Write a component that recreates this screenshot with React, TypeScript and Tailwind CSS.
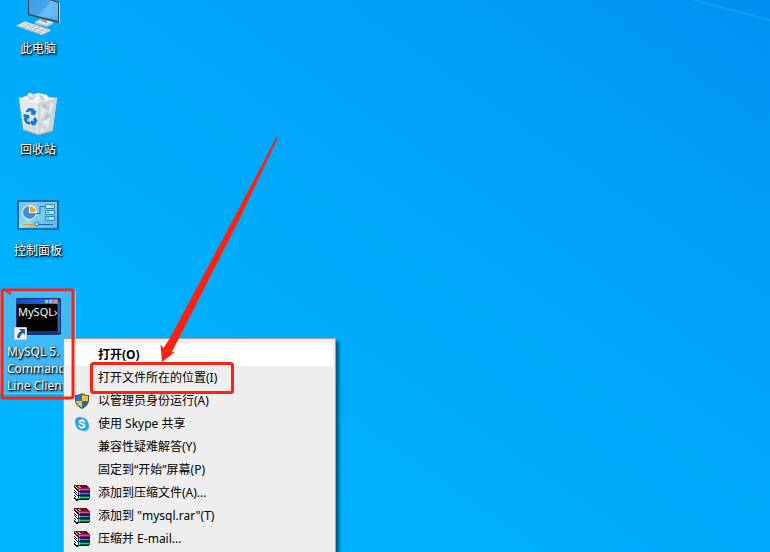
import type { ReactNode } from 'react';
import clsx from 'clsx';

const ComputerIcon = () => (
  <svg viewBox="0 0 48 48" className="size-12 overflow-visible">
    <defs>
      <linearGradient id="screen" x1="0" y1="0" x2="1" y2="1">
        <stop offset="0" stopColor="#3a9be6" />
        <stop offset="0.55" stopColor="#46a6ec" />
        <stop offset="0.56" stopColor="#62b8f4" />
        <stop offset="1" stopColor="#4eacf0" />
      </linearGradient>
    </defs>
    <path d="M21 34l6-3 12 3v2l-6 3-12-3z" fill="#b9c2c9" />
    <path d="M21 34l6-3 12 3-6 3z" fill="#dfe5e9" />
    <path d="M27 27l6 2v6l-6-2z" fill="#8d99a3" />
    <path d="M14 2l31 12v21L14 27z" fill="#34444f" />
    <path d="M45 14l1 .5V35l-1 .5z" fill="#c8d2d8" />
    <path d="M15 4l29 11v18L15 26z" fill="url(#screen)" />
    <path d="M36 12l8 3v13l-17 1z" fill="#8bcbf5" opacity="0.3" />
    <path d="M2.500 37.500L11 33.500 37 42l-9 4.500z" fill="#eef1f3" />
    <path d="M2.500 37.500V38.500L28 47.500l9-4.500V42l-9 4.500z" fill="#a5afb6" />
    <path
      d="M5.500 37.300l25 8.300M8 36l25 8.200M10 34.800l24 8M9 39.700l7-4M14 41.400l7-4M19 43l7-4M24 44.700l7-4"
      stroke="#a9b3ba"
      strokeWidth="0.7"
      fill="none"
    />
  </svg>
);

const RecycleBinIcon = () => (
  <svg viewBox="0 0 48 48" className="size-12 overflow-visible">
    <path d="M5 9l14-4 24 4-4.500 33-14 4-15-5z" fill="#c9d3da" />
    <path d="M5 9l19 4 .5 33-15-5z" fill="#e4e8eb" />
    <path d="M43 9l-19 4 .5 33 14-4z" fill="#ced5da" />
    <path d="M8 9l5-2 2-3 5 1 4-1 5 1 4 1 2 3 4 0-8 3-8 2-11-2z" fill="#f2f4f6" />
    <path d="M12 7l4 2-4 3 7-1 3-4-3-2zM25 6l2 5-5 2 8-1 3-5-5-1z" fill="#c9d0d5" />
    <path d="M14 4l3 1 3 3-5-1zM27 5l6 1-2 4z" fill="#fff" />
    <path d="M27 17l6 5-7 8zM36 13l4 3-5 10zM28 33l8-6-2 12zM27 38l4 4-5 2z" fill="#e6eaed" />
    <path d="M30 14l5 7-7-3zM33 24l4 3-7 5z" fill="#b7c0c8" />
    <path d="M10 35l7 3 5-3 1 10-12-4z" fill="#d3dade" />
    <path d="M5 9l19 4 19-4" stroke="#fff" strokeWidth="0.8" fill="none" opacity="0.8" />
    <path d="M9.500 41l15 5 14-4" stroke="#929ca4" fill="none" />
    <g fill="#1878d0">
      <path d="M11.500 22.500l3-3.500 5 .5 1.500 2.500 1.500-.5-1.500 5-5-1.500 1.500-1-1.500-2.500-2 2z" />
      <path d="M10 25l5 1 .5 4-1.500-.5-1 2 3 1.500v3l-4-1.500-2.500-4 1-2.500-1.500-.5z" />
      <path d="M21.500 28l2 3.500-2 4.500h-3v1.500l-2.500-4 2.500-3v1.500h1.500l-1-2z" />
    </g>
  </svg>
);

const ControlPanelIcon = () => (
  <svg viewBox="0 0 48 48" className="size-12">
    <defs>
      <linearGradient id="panel" x1="0" y1="0" x2="1" y2="1">
        <stop offset="0" stopColor="#6cc0ee" />
        <stop offset="0.5" stopColor="#9bd6f6" />
        <stop offset="1" stopColor="#5db8ee" />
      </linearGradient>
    </defs>
    <path d="M3 10h42v30H3z" fill="#176f9f" />
    <path d="M5 12h38v26H5z" fill="url(#panel)" />
    <path d="M24 12h19v26H16z" fill="#4fb3ec" opacity="0.3" />
    <circle cx="15.500" cy="22.500" r="7.500" fill="#dff1fb" />
    <circle cx="15.500" cy="22.500" r="6.500" fill="#3f92d0" />
    <path d="M15 23v-8a7.500 7.500 0 0 1 8 8z" fill="#fff" />
    <path d="M16 22v-6a6 6 0 0 1 6 6z" fill="#f9a11c" />
    <path d="M22 23.500h4v-7h5" stroke="#1876b4" fill="none" />
    <path d="M31.500 14.500h9v4h-9zM31.500 20.500h9v4h-9zM31.500 26.500h9v4h-9z" fill="#c8e8fa" stroke="#2389c4" />
    <path d="M37 16.500h2" stroke="#f28a10" />
    <path d="M33 22.500h2M33 28.500h2" stroke="#1876b4" />
    <path d="M9 34.500h13" stroke="#f79a1c" />
    <path d="M24 34.500h15" stroke="#1565a8" />
    <path d="M21.500 32.500h3v3h-3z" fill="#fff" stroke="#1b86c8" />
  </svg>
);

const MysqlIcon = () => (
  <svg viewBox="0 0 48 48" className="size-12 overflow-visible">
    <defs>
      <linearGradient id="titlebar" x1="0" y1="0" x2="1" y2="0">
        <stop offset="0" stopColor="#1549b8" />
        <stop offset="0.7" stopColor="#2068dc" />
        <stop offset="1" stopColor="#4b94ee" />
      </linearGradient>
    </defs>
    <rect x="2" y="7" width="45" height="37" rx="2" fill="#10357c" />
    <path d="M44 10l2 1v30l-2 1z" fill="#2d5fae" />
    <path d="M2 8h42v5H2z" fill="url(#titlebar)" />
    <path d="M31 9h3v3h-3zM35 9h3v3h-3z" fill="#9cc8fa" />
    <path d="M39 9h4v3h-4z" fill="#e08a72" />
    <path d="M3 13h40v27H3z" fill="#000" />
    <text
      x="4"
      y="25"
      fill="#fff"
      className="font-['Noto_Sans',sans-serif] text-[11px]">
      MySQL›
    </text>
    <path d="M.5 36.500h12v12H.5z" fill="#f4f6f8" stroke="#c3c9ce" />
    <path d="M5 38h6v6l-2-2c-2 1.500-3 3-3 5H3c0-3 1.500-5.500 4-7z" fill="#245f9e" />
  </svg>
);

const ShieldIcon = () => (
  <svg viewBox="0 0 16 16" className="size-4">
    <path d="M8 0c2 1.500 4.500 2 7 2v5c0 4-3 7-7 9-4-2-7-5-7-9V2c2.500 0 5-.5 7-2z" fill="#46505a" />
    <path d="M8 1.500V8H2V3c2.200-.1 4.200-.5 6-1.500z" fill="#2374d8" />
    <path d="M8 1.500C9.800 2.500 11.800 2.900 14 3v5H8z" fill="#fcc419" />
    <path d="M2 8h6v6.700C4.800 13 2.300 11 2 8z" fill="#fcc419" />
    <path d="M8 8h6c-.3 3-2.800 5-6 6.700z" fill="#1d66cc" />
  </svg>
);

const SkypeIcon = () => (
  <svg viewBox="0 0 16 16" className="size-4">
    <circle cx="8" cy="8" r="6.500" fill="#2aa5ec" />
    <circle cx="5.500" cy="5.500" r="4.500" fill="#2aa5ec" />
    <circle cx="10.500" cy="10.500" r="4.500" fill="#2aa5ec" />
    <path
      d="M10.500 5.800C10 4.800 9.200 4.400 8 4.400c-1.400 0-2.400.6-2.400 1.700C5.600 8.600 10.500 7 10.500 9.800c0 1.200-1.100 1.900-2.500 1.900-1.300 0-2.300-.6-2.700-1.700"
      stroke="#fff"
      strokeWidth="1.700"
      strokeLinecap="round"
      fill="none"
    />
  </svg>
);

const RarIcon = () => (
  <svg viewBox="0 0 16 16" className="size-4 overflow-visible" shapeRendering="crispEdges">
    {/* pages on the left side */}
    <path d="M0 1h4v14H3l-3-3z" fill="#fff" />
    <path
      d="M0 1h1v1h1v1h1v1h1v2H3V5H2V4H1V3H0zM0 5h1v1h1v1h1v1H2V7H1V6H0zM0 7h1v1h1v1h1v1h1v1H3v-1H2V9H1V8H0zM0 10h1v1h1v1H1v-1H0zM0 12h1v1h1v1h1v1h1v1H2v-1H1v-1H0z"
      fill="#111"
    />
    {/* top cover */}
    <path d="M0 0h13v1h1v1h1v1h1v1H4V3H3V2H2V1H0z" fill="#6d0e30" />
    <path d="M4 3h12v3H4z" fill="#a3135c" />
    <path d="M6 4h9v1H6z" fill="#e04c9c" />
    <path d="M4 6h12v1H4z" fill="#180410" />
    <path d="M4 7h12v3H4z" fill="#063c80" />
    <path d="M6 8h9v1H6z" fill="#2e8fe0" />
    <path d="M4 10h12v1H4z" fill="#030f24" />
    <path d="M4 11h12v3H4z" fill="#06683e" />
    <path d="M6 12h9v1H6z" fill="#30c486" />
    <path d="M3 14h12v1H3z" fill="#04180f" />
    <path d="M4 1h2v1h1v1H5V2H4zM5 4h1v2H5zM5 7h1v3H5zM5 11h1v3H5z" fill="#e0c01c" />
  </svg>
);

type DesktopItemProps = {
  icon: ReactNode;
  label: string;
  selected?: boolean;
};

const DesktopItem = ({ icon, label, selected }: DesktopItemProps) => (
  <button
    type="button"
    className={clsx(
      'flex min-h-[101px] w-full flex-col items-center gap-1 text-white',
      selected && 'bg-[#3fb9f8] outline-1 -outline-offset-1 outline-[#7fd0fb]'
    )}>
    {icon}
    <span className="max-w-[62px] text-left text-xs leading-[17px] [text-shadow:1px_1px_1px_#000,1px_1px_3px_#000]">
      {label}
    </span>
  </button>
);

const menuItems: { label: string; icon?: ReactNode; active?: boolean }[] = [
  { label: '打开(O)', active: true },
  { label: '打开文件所在的位置(I)' },
  { label: '以管理员身份运行(A)', icon: <ShieldIcon /> },
  { label: '使用 Skype 共享', icon: <SkypeIcon /> },
  { label: '兼容性疑难解答(Y)' },
  { label: '固定到“开始”屏幕(P)' },
  { label: '添加到压缩文件(A)...', icon: <RarIcon /> },
  { label: '添加到 "mysql.rar"(T)', icon: <RarIcon /> },
  { label: '压缩并 E-mail...', icon: <RarIcon /> },
];

const ContextMenu = () => (
  <div
    role="menu"
    className="absolute top-[338px] bottom-0 left-[63px] w-[273px] border border-b-0 border-[#a0a0a0] bg-[#eeeeee] px-[2px] pt-1 text-black shadow-[3px_3px_3px_rgba(0,0,0,0.5)]">
    {menuItems.map((item) => (
      <button
        key={item.label}
        type="button"
        role="menuitem"
        className={clsx(
          'flex h-[23px] w-full items-center gap-2 pl-2 text-left text-xs whitespace-nowrap',
          item.active && 'bg-white font-bold'
        )}>
        <span className="size-4">{item.icon}</span>
        {item.label}
      </button>
    ))}
  </div>
);

const Annotations = () => (
  <svg
    width="300"
    height="420"
    className="pointer-events-none absolute top-0 left-0"
    fill="none">
    <rect x="2" y="290" width="71" height="108" rx="2" stroke="#ff2010" strokeWidth="3" />
    <path d="M3 289l8 5" stroke="#ff2010" strokeWidth="2" />
    <rect x="91.500" y="363.500" width="141" height="29" rx="2" stroke="#ff2010" strokeWidth="3" />
    <path
      d="M278 137.500L240 218 179 338l-7.500 14.500 4-1L162 362l-1.500-17.500 3 3.500 6.500-10L234 218l42.500-81z"
      fill="#ff2010"
    />
  </svg>
);

export default function App() {
  return (
    <main className="relative h-screen overflow-hidden bg-[linear-gradient(215deg,#0092f2_0%,#009ff6_24%,#00a9fb_49%,#00b1ff_74%,#00b5ff_100%)] font-['Noto_Sans','Noto_Sans_CJK_SC',sans-serif]">
      <svg width="90" height="30" className="absolute top-0 right-0">
        <path d="M10 0l80 20V0z" fill="#008cec" opacity="0.4" />
        <path d="M10 -1l80 21" stroke="#1ba6fa" strokeWidth="2" opacity="0.7" />
      </svg>
      <nav className="-mt-3 flex w-[76px] flex-col">
        <DesktopItem icon={<ComputerIcon />} label="此电脑" />
        <DesktopItem icon={<RecycleBinIcon />} label="回收站" />
        <DesktopItem icon={<ControlPanelIcon />} label="控制面板" />
        <DesktopItem icon={<MysqlIcon />} label="MySQL 5. Command Line Client" selected />
      </nav>
      <ContextMenu />
      <Annotations />
    </main>
  );
}
